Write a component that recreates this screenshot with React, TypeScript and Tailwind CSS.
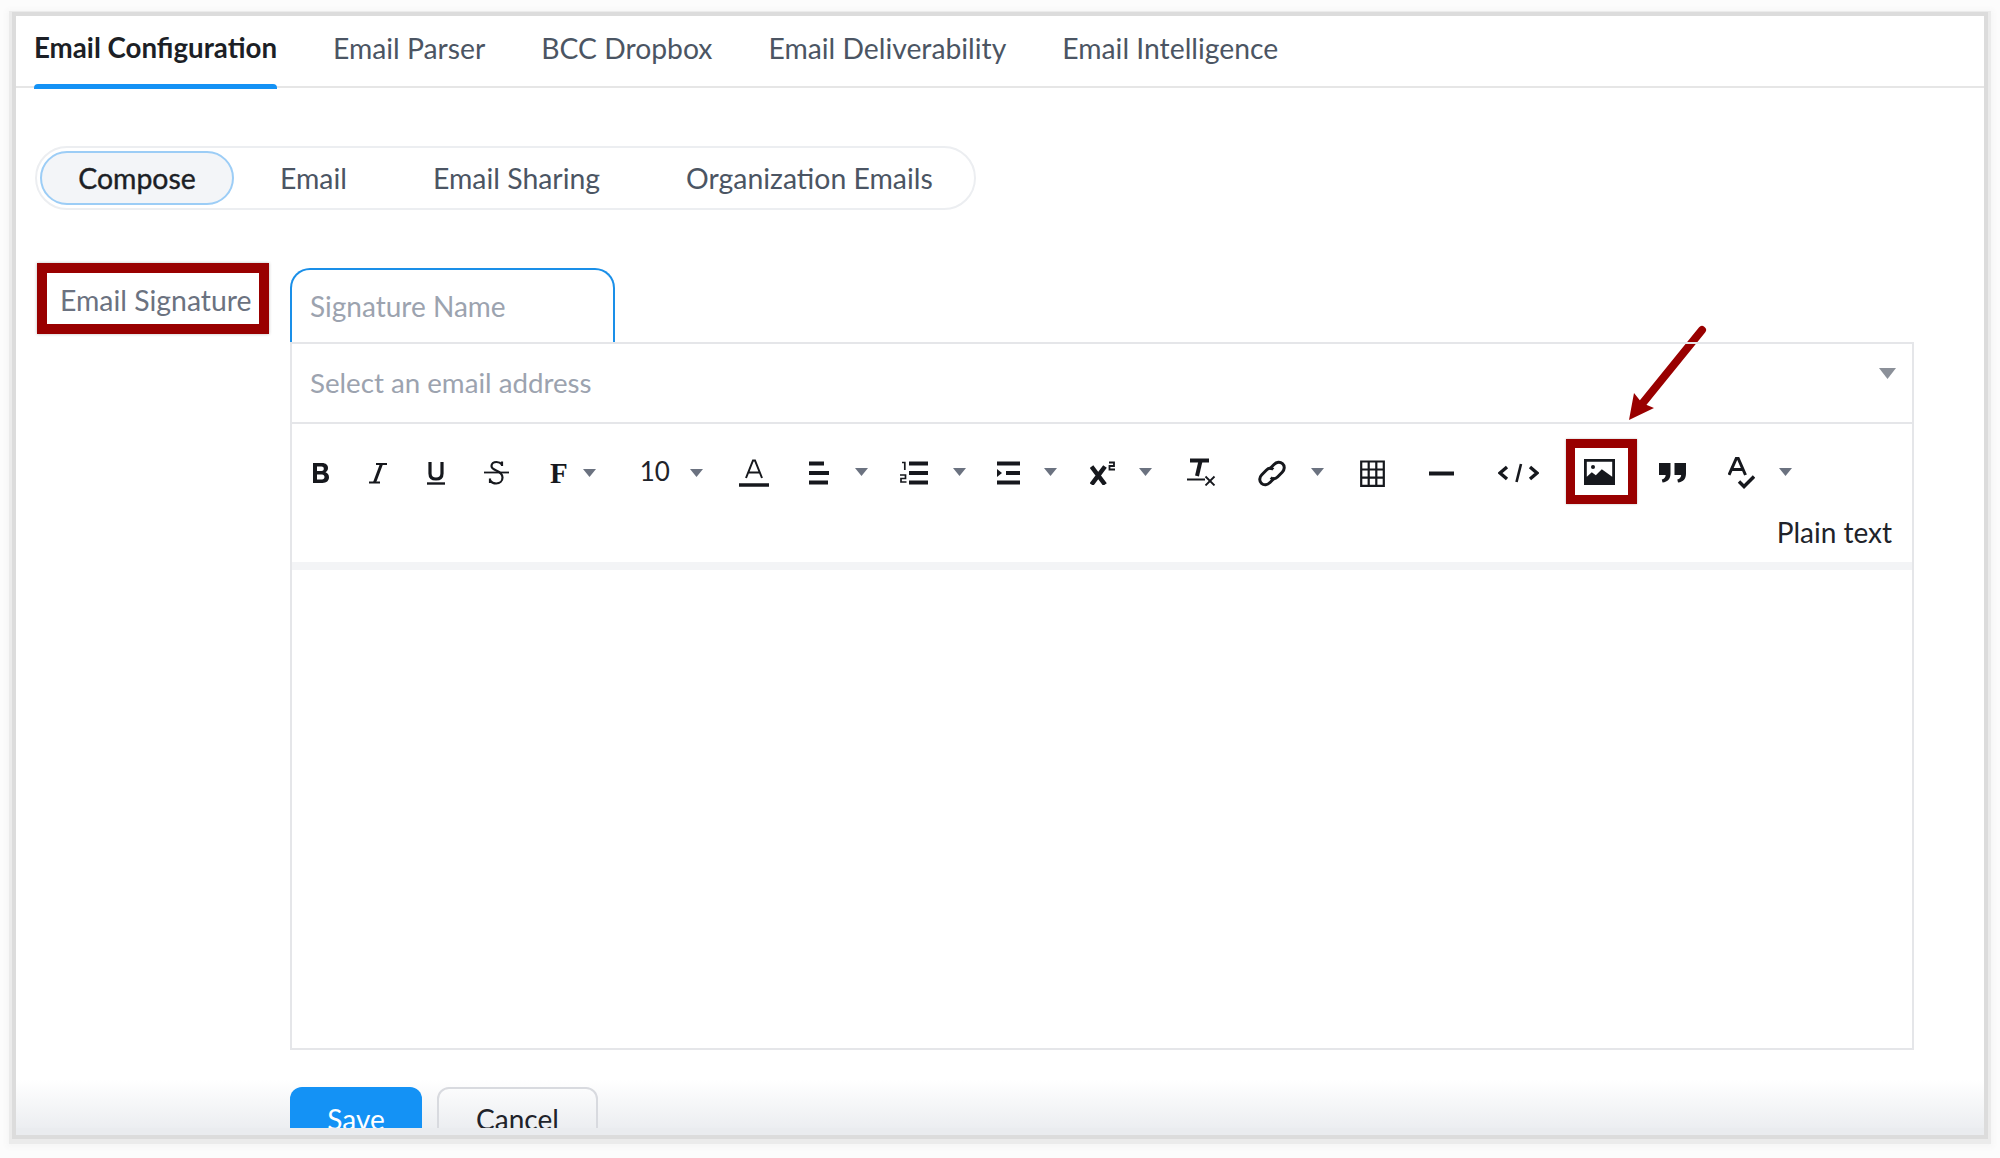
import React from 'react';

const Caret = ({ className = '' }: { className?: string }) => (
  <svg width="13" height="8" viewBox="0 0 13 8" className={`shrink-0 ${className}`}>
    <path d="M0 0h13L6.5 8z" fill="#6b7280" />
  </svg>
);

const Icon = ({ w, h, children, className = '' }: { w: number; h: number; children: React.ReactNode; className?: string }) => (
  <svg width={w} height={h} viewBox={`0 0 ${w} ${h}`} fill="none" className={`shrink-0 ${className}`}>
    {children}
  </svg>
);

const topTabs = ['Email Parser', 'BCC Dropbox', 'Email Deliverability', 'Email Intelligence'];

export default function App() {
  return (
    <div className="relative h-[1158px] w-[2000px] overflow-hidden bg-[#fcfcfc] font-['Lato',sans-serif]">
      <div className="absolute left-[16px] top-[16px] flex h-[1119px] w-[1968px] flex-col overflow-hidden bg-white">
        {/* fade behind the cut-off bottom of the page */}
        <div className="absolute bottom-[7px] left-0 h-[48px] w-full bg-gradient-to-b from-white to-[#eceef1]" />

        {/* top tabs */}
        <div className="relative z-10 flex h-[72px] shrink-0 items-start gap-[56px] border-b-2 border-[#e6e6e6] pl-[18px] pt-[10px] text-[28.3px] leading-[44px] text-[#4b5563]">
          <div className="relative h-[61px] text-[27.7px] font-bold text-[#1c1f26]">
            <span>Email Configuration</span>
            <div className="absolute bottom-[-2px] left-0 h-[5px] w-full rounded-t-[4px] bg-[#1492f5]" />
          </div>
          {topTabs.map((t) => (
            <span key={t}>{t}</span>
          ))}
        </div>

        {/* sub tabs */}
        <div className="relative z-10 ml-[19px] mt-[58px] flex h-[64px] w-[941px] shrink-0 items-center rounded-[32px] border-2 border-[#eceef1] pl-[3px] text-[28.4px] text-[#4b5563]">
          <div className="flex h-[54px] w-[194px] items-center justify-center rounded-[27px] border-2 border-[#9ccdf6] bg-[#f3f5f8] text-[#1c1f26] [-webkit-text-stroke:0.4px_#1c1f26]">
            Compose
          </div>
          <span className="ml-[46px]">Email</span>
          <span className="ml-[86px]">Email Sharing</span>
          <span className="ml-[86px]">Organization Emails</span>
        </div>

        <div className="relative z-10 mt-[58px] flex min-h-0 flex-1 items-start">
          <div className="ml-[21px] mt-[-5px] flex h-[71px] w-[232px] shrink-0 items-center border-[10px] border-[#990000] pl-[13px] pt-[4px] text-[28.4px] text-[#6b7280] shadow-[0_0_3px_#bbb]">
            <span className="whitespace-nowrap">Email Signature</span>
          </div>

          <div className="ml-[21px] flex w-[1624px] flex-col">
            <div className="flex h-[74px] w-[325px] items-center rounded-t-[20px] border-x-2 border-t-2 border-[#1a8fe8] pl-[18px] text-[28px] text-[#9ca3af]">
              Signature Name
            </div>
            <div className="border-2 border-[#e5e6e9]">
              <div className="flex h-[80px] items-center justify-between border-b-2 border-[#e5e6e9] pl-[18px] pr-[16px] text-[27.7px] text-[#9ca3af]">
                <span>Select an email address</span>
                <svg width="17" height="11" viewBox="0 0 17 11" className="mt-[-20px]">
                  <path d="M0 0h17L8.5 11z" fill="#8b9099" />
                </svg>
              </div>

              {/* toolbar */}
              <div className="h-[138px] text-[#16181d]">
                <div className="flex h-[96px] items-center pl-[21px] pt-[2px]">
                  <Icon w={16} h={20}>
                    <path d="M0 0h9c4 0 6 2.200 6 5 0 2-1 3.500-2.500 4.300 2 .8 3.500 2.300 3.500 5 0 3.500-2.500 5.700-6.500 5.700H0zM4 3.500V8h4.500c1.400 0 2.300-.9 2.300-2.250S9.900 3.500 8.500 3.500zM4 11.500v5h5c1.500 0 2.500-1 2.500-2.500s-1-2.500-2.500-2.500z" fill="#16181d" fillRule="evenodd" />
                  </Icon>
                  <Icon w={20} h={22} className="ml-[39px]">
                    <path d="M8 2h11M1 20.500h11" stroke="#16181d" strokeWidth="2" />
                    <path d="M13.500 2 6.500 20.500" stroke="#16181d" strokeWidth="3" />
                  </Icon>
                  <Icon w={18} h={23} className="ml-[39px]">
                    <path d="M3 0v11.500c0 3.500 2.400 5.500 6 5.500s6-2 6-5.500V0" stroke="#16181d" strokeWidth="3.200" />
                    <path d="M0 21.500h18" stroke="#16181d" strokeWidth="2.400" />
                  </Icon>
                  <Icon w={25} h={26} className="ml-[39px]">
                    <path d="M18 4.500C16.500 2.800 14.500 2 12.500 2 9.500 2 7.500 3.700 7.500 6c0 5.500 11 3.500 11 11.500 0 3.500-2.700 6-6.300 6-2.700 0-4.700-1-6.200-3M18 1.500v4.500M6 18.500V23" stroke="#16181d" strokeWidth="2.200" />
                    <path d="M0 12.500h25" stroke="#16181d" strokeWidth="1.800" />
                  </Icon>
                  <span className="ml-[41px] font-['Liberation_Serif',serif] text-[29px] font-bold leading-none">F</span>
                  <Caret className="ml-[15px]" />
                  <span className="ml-[44px] mt-[-4px] text-[26px] leading-none text-[#20232a]">10</span>
                  <Caret className="ml-[20px]" />
                  <Icon w={30} h={28} className="ml-[36px]">
                    <path d="M7 19 14 1.500h2L23 19M9.500 13.500h11" stroke="#16181d" strokeWidth="2" />
                    <path d="M0 26h30" stroke="#16181d" strokeWidth="3.500" />
                  </Icon>
                  <Icon w={20} h={24} className="ml-[40px]">
                    <path d="M0 2.500h15M0 12h20M0 21.500h19" stroke="#16181d" strokeWidth="4" />
                  </Icon>
                  <Caret className="ml-[26px] mt-[-2px]" />
                  <Icon w={28} h={24} className="ml-[32px]">
                    <path d="M2 1.500h2.800v7.500M0 14h5.500v3.500H1V21h5.500" stroke="#16181d" strokeWidth="1.700" />
                    <path d="M9 2.500h19M9 12h19M9 21.500h19" stroke="#16181d" strokeWidth="4" />
                  </Icon>
                  <Caret className="ml-[25px] mt-[-2px]" />
                  <Icon w={23} h={24} className="ml-[31px]">
                    <path d="M0 2.500h23M9 12h14M0 21.500h23" stroke="#16181d" strokeWidth="4" />
                    <path d="M0 8v8l5-4z" fill="#16181d" />
                  </Icon>
                  <Caret className="ml-[24px] mt-[-2px]" />
                  <Icon w={25} h={24} className="ml-[33px]">
                    <path d="M1.500 5.500 15 23.500M15 5.500 1.500 23.500" stroke="#16181d" strokeWidth="4.500" />
                    <path d="M19 1.500h5v3.500h-4.500v3.500H25" stroke="#16181d" strokeWidth="1.800" />
                  </Icon>
                  <Caret className="ml-[24px] mt-[-2px]" />
                  <Icon w={29} h={28} className="ml-[35px] mt-[-2px]">
                    <path d="M3 2.500h19" stroke="#16181d" strokeWidth="4" />
                    <path d="M13.500 3 10 18" stroke="#16181d" strokeWidth="4" />
                    <path d="M0 21.500h18" stroke="#16181d" strokeWidth="2" />
                    <path d="M18.500 18.500l9 9M27.500 18.500l-9 9" stroke="#16181d" strokeWidth="1.800" />
                  </Icon>
                  <Icon w={30} h={29} className="ml-[41px]">
                    <path d="M12.500 10 17 5.500c2.500-2.500 6-3 8.500-.8s2.200 6-.3 8.500L20.500 18c-2.200 2.200-5 2.200-6.800.6" stroke="#16181d" strokeWidth="3" />
                    <path d="M17.500 19 13 23.500c-2.500 2.500-6 3-8.500.8s-2.200-6 .3-8.500L9.500 11c2.200-2.200 5-2.200 6.800-.6" stroke="#16181d" strokeWidth="3" />
                  </Icon>
                  <Caret className="ml-[24px] mt-[-2px]" />
                  <Icon w={25} h={27} className="ml-[36px]">
                    <path d="M1.200 1.500h22.600v24.300H1.200zM1.200 9.500h22.600M1.200 17.700h22.600M8.700 1.500v24.300M16.300 1.500v24.300" stroke="#16181d" strokeWidth="2.200" />
                  </Icon>
                  <Icon w={25} h={5} className="ml-[44px]">
                    <path d="M0 2.500h25" stroke="#16181d" strokeWidth="4" />
                  </Icon>
                  <Icon w={41} h={22} className="ml-[44px]">
                    <path d="M9 5 2 11l7 6M32 5l7 6-7 6" stroke="#16181d" strokeWidth="3.400" />
                    <path d="M23 2l-4.500 18" stroke="#16181d" strokeWidth="2.600" />
                  </Icon>
                  <div className="ml-[27px] mt-[-4px] flex h-[65px] w-[71px] shrink-0 items-center justify-center border-[9px] border-[#990000] pt-[2px] shadow-[0_0_2px_#bbb]">
                    <Icon w={31} h={26} className="mr-[3px]">
                      <path fillRule="evenodd" d="M0 0h31v26H0zM2.800 2.800v15l5-4.500 4 3 6-6 10.400 7.500V2.800z" fill="#16181d" />
                      <circle cx="9" cy="8" r="2" fill="#16181d" />
                    </Icon>
                  </div>
                  <Icon w={27} h={20} className="ml-[22px]">
                    <path d="M0 0h11.500v10.500C11.500 15.500 9 19 3.500 19.500L2.800 16.500C5 16 6.500 14.800 6.700 12H0zM15.500 0H27v10.500c0 5-2.500 8.500-8 9l-.7-3c2.200-.5 3.700-1.700 3.900-4.500h-6.700z" fill="#16181d" />
                  </Icon>
                  <Icon w={27} h={32} className="ml-[42px]">
                    <path d="M1 18 8.500 1h1.500l7.500 17M4.300 12.500h10.500" stroke="#16181d" strokeWidth="3" />
                    <path d="M11 24.500l5 5L26 19.500" stroke="#16181d" strokeWidth="3.400" />
                  </Icon>
                  <Caret className="ml-[24px] mt-[-2px]" />
                </div>
                <div className="mt-[-10px] flex justify-end pr-[20px] text-[28px] leading-[44px] text-[#20232a]">Plain text</div>
              </div>

              <div className="h-[8px] bg-[#f3f4f6]" />
              <div className="h-[478px]" />
            </div>

            <div className="mt-[37px] flex gap-[15px] text-[28px]">
              <div className="flex h-[70px] w-[132px] justify-center rounded-t-[12px] bg-[#1492f5] pt-[10px] leading-[44px] text-white">Save</div>
              <div className="flex h-[70px] w-[161px] justify-center rounded-t-[12px] border-2 border-[#d8dadf] pt-[8px] leading-[44px] text-[#20232a]">Cancel</div>
            </div>
          </div>
        </div>

        <div className="absolute bottom-0 left-0 z-20 h-[7px] w-full bg-[#eaecef]" />
      </div>

      {/* window edge */}
      <div className="pointer-events-none absolute left-[16px] top-[16px] h-[1119px] w-[1968px] shadow-[0_0_0_4px_#dcdcdc,0_2px_0_7px_#ebebeb,0_3px_6px_9px_#f5f5f5]" />

      {/* annotation arrow */}
      <svg width="100" height="110" viewBox="0 0 100 110" className="absolute left-[1620px] top-[320px]">
        <path d="M82 10 22 84" stroke="#990000" strokeWidth="8" strokeLinecap="round" />
        <path d="M9 100 L14 73 L22 83 L34 88z" fill="#990000" />
      </svg>
    </div>
  );
}
